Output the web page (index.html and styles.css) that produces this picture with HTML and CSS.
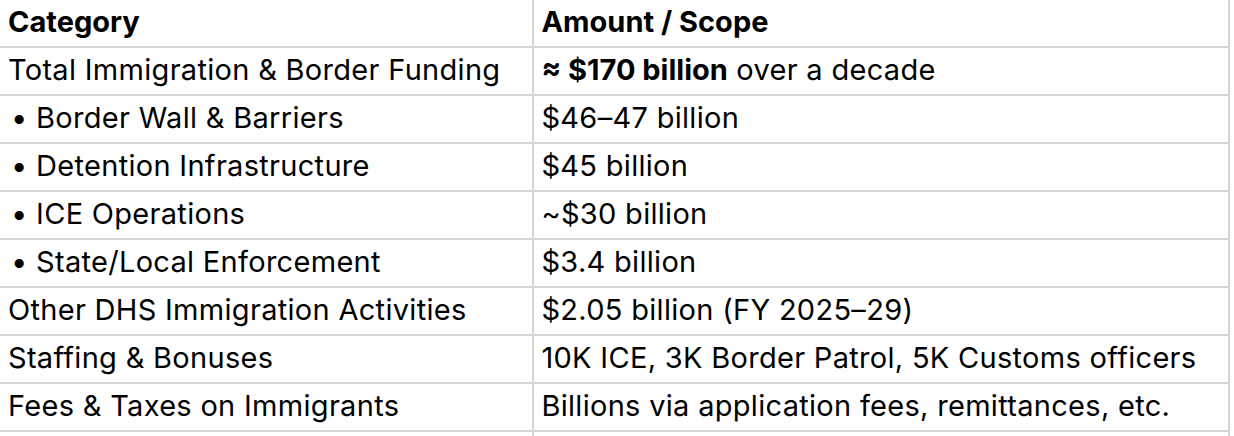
FILE: index.html
```html
<!DOCTYPE html>
<html>
<head>
<meta charset="utf-8">
<link rel="stylesheet" href="styles.css">
</head>
<body>
<table class="sheet">
  <tr class="head"><td class="c1">Category</td><td class="c2">Amount / Scope</td></tr>
  <tr><td class="c1">Total Immigration &amp; Border Funding</td><td class="c2"><b>≈ $170 billion</b> over a decade</td></tr>
  <tr><td class="c1 sub">• Border Wall &amp; Barriers</td><td class="c2">$46–47 billion</td></tr>
  <tr><td class="c1 sub">• Detention Infrastructure</td><td class="c2">$45 billion</td></tr>
  <tr><td class="c1 sub">• ICE Operations</td><td class="c2">~$30 billion</td></tr>
  <tr><td class="c1 sub">• State/Local Enforcement</td><td class="c2">$3.4 billion</td></tr>
  <tr><td class="c1">Other DHS Immigration Activities</td><td class="c2">$2.05 billion (FY 2025–29)</td></tr>
  <tr><td class="c1">Staffing &amp; Bonuses</td><td class="c2">10K ICE, 3K Border Patrol, 5K Customs officers</td></tr>
  <tr><td class="c1">Fees &amp; Taxes on Immigrants</td><td class="c2">Billions via application fees, remittances, etc.</td></tr>
  <tr class="empty"><td class="c1"></td><td class="c2"></td></tr>
</table>
</body>
</html>
```
FILE: styles.css
```css
html, body {
  margin: 0;
  padding: 0;
  background: #ffffff;
  overflow: hidden;
}
.sheet {
  border-collapse: collapse;
  table-layout: fixed;
  width: 1230px;
  font-family: "Inter", "Liberation Sans", sans-serif;
  font-size: 29px;
  letter-spacing: 0.3px;
  color: #000000;
}
.sheet td {
  height: 44px;
  padding: 0 0 2px 8px;
  line-height: 44px;
  border-bottom: 2px solid #d4d4d4;
  white-space: nowrap;
  vertical-align: middle;
  box-sizing: content-box;
}
.sheet .c1 {
  width: 524px;
  border-right: 2px solid #d4d4d4;
}
.sheet .c2 {
  width: 686px;
  padding-left: 7px;
  border-right: 2px solid #d4d4d4;
}
.sheet .sub {
  padding-left: 11px;
}
.head td {
  font-weight: 700;
  letter-spacing: 0;
}
.empty td {
  height: 4px;
  line-height: 4px;
  padding-bottom: 0;
  border-bottom: none;
}
b {
  font-weight: 700;
  letter-spacing: 0;
}
```
